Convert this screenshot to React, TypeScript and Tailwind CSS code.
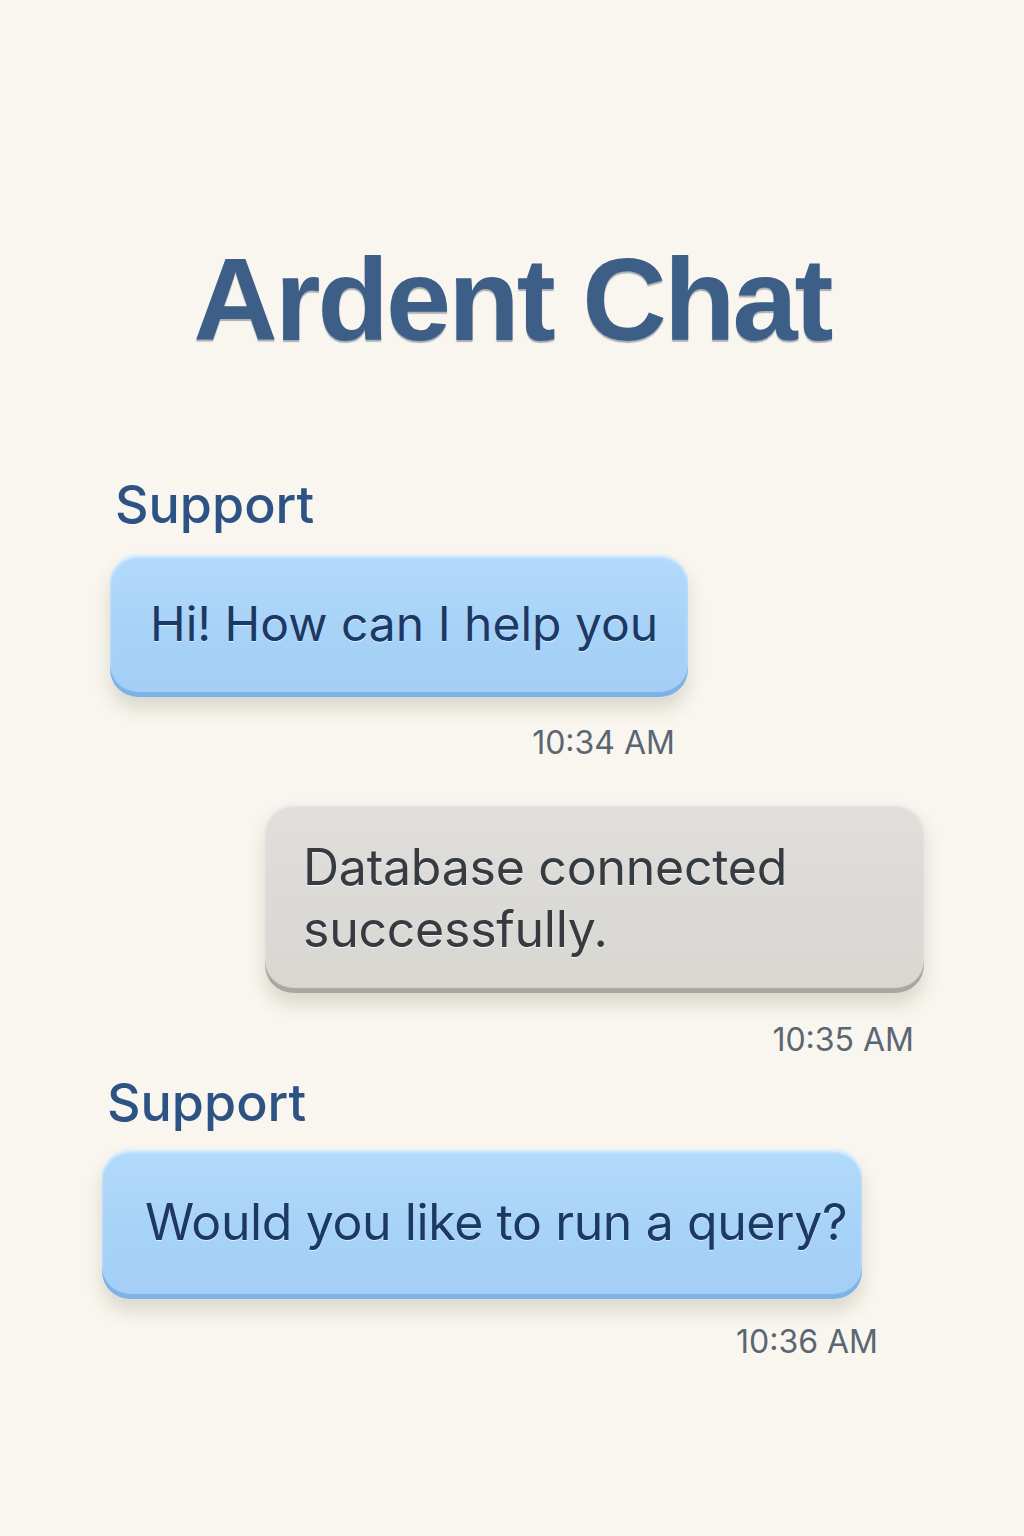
const sans = "font-['Inter','Noto_Sans',sans-serif]"

type Msg = {
  from?: string
  text: string
  time: string
  kind: 'support' | 'system'
}

function Bubble({ kind, children, className }: { kind: Msg['kind']; children: React.ReactNode; className: string }) {
  const tone =
    kind === 'support'
      ? 'bg-[linear-gradient(180deg,#b2dafb_0%,#a8d3f8_50%,#a4cef5_100%)] text-[#1c3965] shadow-[inset_0_-5px_1px_#7cb3e6,inset_0_3px_3px_rgba(255,255,255,0.65),0_12px_18px_rgba(60,60,40,0.16)]'
      : 'bg-[linear-gradient(180deg,#e1dfdb_0%,#dcdad6_50%,#d9d7d2_100%)] text-[#363b41] shadow-[inset_0_-5px_1px_#a9a7a2,inset_0_3px_3px_rgba(255,255,255,0.65),0_12px_18px_rgba(60,60,40,0.16)]'
  return <div className={`rounded-[28px] ${tone} ${className}`}>{children}</div>
}

export default function App() {
  return (
    <div className={`min-h-[1536px] w-full bg-[#f9f6ef] pt-[240px] ${sans}`}>
      <h1 className="text-center font-['Liberation_Sans',Arial,sans-serif] text-[117px] font-bold leading-[120px] tracking-tight text-[#3d5f87] [text-shadow:0_2px_1px_rgba(20,40,70,0.35)]">
        Ardent Chat
      </h1>

      {/* first support message */}
      <div className="mt-[115px] ml-[115px] text-[52px] font-medium leading-[60px] text-[#2d5284]">Support</div>
      <div className="mt-[19px] ml-[110px] w-[578px]">
        <Bubble kind="support" className="flex h-[143px] items-center px-[40px] pb-[4px]">
          <span className="whitespace-nowrap text-[48px] leading-[60px] [text-shadow:0_1px_0_rgba(255,255,255,0.6)]">
            Hi! How can I help you
          </span>
        </Bubble>
        <div className="mt-[26px] mr-[13px] text-right text-[32px] leading-[40px] text-[#5b6673]">10:34 AM</div>
      </div>

      {/* system message */}
      <div className="mt-[40px] ml-[265px] w-[659px]">
        <Bubble kind="system" className="px-[38px] py-[33px]">
          <p className="text-[50px] leading-[62px] tracking-[-0.005em] [text-shadow:0_1px_0_rgba(255,255,255,0.7)]">
            Database connected successfully.
          </p>
        </Bubble>
        <div className="mt-[27px] mr-[10px] text-right text-[32px] leading-[40px] text-[#5b6673]">10:35 AM</div>
      </div>

      {/* second support message */}
      <div className="mt-[13px] ml-[107px] text-[52px] font-medium leading-[60px] text-[#2d5284]">Support</div>
      <div className="mt-[16px] ml-[102px] w-[760px]">
        <Bubble kind="support" className="flex h-[150px] items-center pl-[43px] pb-[4px]">
          <span className="whitespace-nowrap text-[50px] leading-[60px] tracking-[-0.008em] [text-shadow:0_1px_0_rgba(255,255,255,0.6)]">
            Would you like to run a query?
          </span>
        </Bubble>
        <div className="mt-[23px] mr-[-16px] text-right text-[32px] leading-[40px] text-[#5b6673]">10:36 AM</div>
      </div>
    </div>
  )
}
